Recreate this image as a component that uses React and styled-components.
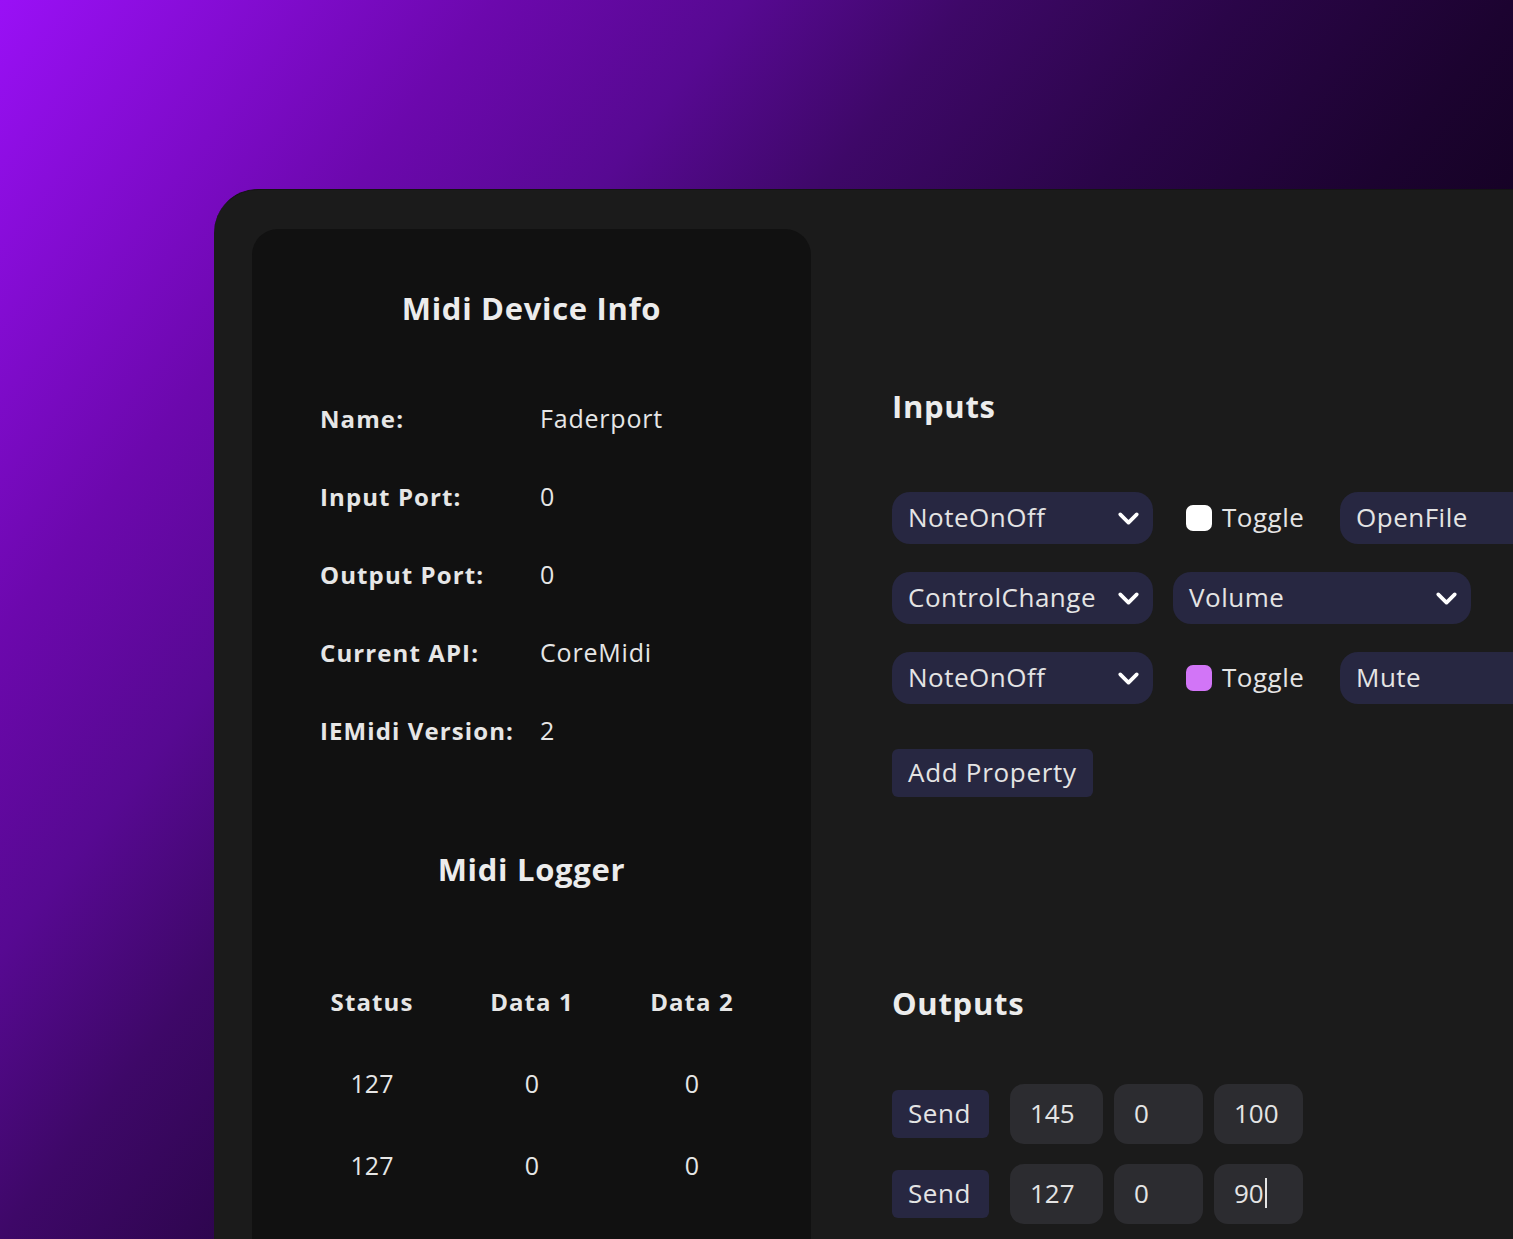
import React from "react";
import styled, { createGlobalStyle } from "styled-components";
import { ChevronDown } from "lucide-react";

const GlobalStyle = createGlobalStyle`
  html, body {
    margin: 0;
    padding: 0;
  }
  body {
    font-family: "Open Sans", "Liberation Sans", sans-serif;
    color: #e8e8e8;
  }
`;

const deviceInfo = [
  ["Name:", "Faderport"],
  ["Input Port:", "0"],
  ["Output Port:", "0"],
  ["Current API:", "CoreMidi"],
  ["IEMidi Version:", "2"],
];

const logRows = [
  ["127", "0", "0"],
  ["127", "0", "0"],
];

function Select({ value, width }) {
  return (
    <SelectBox $width={width}>
      <span>{value}</span>
      <ChevronDown size={33} strokeWidth={2.7} color="#ffffff" />
    </SelectBox>
  );
}

function App() {
  return (
    <>
      <GlobalStyle />
      <Page>
        <Window>
          <InfoPanel>
            <PanelTitle>Midi Device Info</PanelTitle>
            <InfoList>
              {deviceInfo.map(([label, value]) => (
                <InfoRow key={label}>
                  <Label>{label}</Label>
                  <Value>{value}</Value>
                </InfoRow>
              ))}
            </InfoList>
            <LoggerTitle>Midi Logger</LoggerTitle>
            <LogTable>
              <LogHead>Status</LogHead>
              <LogHead>Data 1</LogHead>
              <LogHead>Data 2</LogHead>
              {logRows.map((row, i) =>
                row.map((cell, j) => <LogCell key={`${i}-${j}`}>{cell}</LogCell>)
              )}
            </LogTable>
          </InfoPanel>

          <Main>
            <SectionTitle>Inputs</SectionTitle>
            <InputList>
              <PropRow>
                <Select value="NoteOnOff" width={261} />
                <ToggleLabel>
                  <Check $on={false} />
                  Toggle
                </ToggleLabel>
                <TextField>OpenFile</TextField>
              </PropRow>
              <PropRow>
                <Select value="ControlChange" width={261} />
                <Select value="Volume" width={298} />
              </PropRow>
              <PropRow>
                <Select value="NoteOnOff" width={261} />
                <ToggleLabel>
                  <Check $on />
                  Toggle
                </ToggleLabel>
                <TextField>Mute</TextField>
              </PropRow>
            </InputList>
            <AddButton>Add Property</AddButton>

            <OutputsTitle>Outputs</OutputsTitle>
            <OutputList>
              <OutRow>
                <SendButton>Send</SendButton>
                <NumField $width={93}>145</NumField>
                <NumField $width={89}>0</NumField>
                <NumField $width={89}>100</NumField>
              </OutRow>
              <OutRow>
                <SendButton>Send</SendButton>
                <NumField $width={93}>127</NumField>
                <NumField $width={89}>0</NumField>
                <NumField $width={89}>
                  90<Caret />
                </NumField>
              </OutRow>
            </OutputList>
          </Main>
        </Window>
      </Page>
    </>
  );
}

export default App;

const Page = styled.div`
  width: 1513px;
  height: 1239px;
  overflow: hidden;
  background: linear-gradient(
    128deg,
    #9a10f6 0%,
    #6c08ad 20%,
    #570992 30%,
    #3e0868 39%,
    #2a0548 50%,
    #1c0330 61%,
    #0a0010 80%,
    #06000a 100%
  );
  padding: 189px 0 0 214px;
  box-sizing: border-box;
`;

const Window = styled.div`
  width: 1400px;
  height: 1100px;
  background: #1b1b1b;
  border-top: 1px solid #141414;
  border-top-left-radius: 44px;
  box-sizing: border-box;
  padding: 39px 0 0 38px;
  display: grid;
  grid-template-columns: 559px 1fr;
  column-gap: 81px;
  overflow: hidden;
`;

const InfoPanel = styled.div`
  background: #111111;
  border-radius: 26px 26px 0 0;
  padding: 59px 0 0 68px;
  display: flex;
  flex-direction: column;
`;

const PanelTitle = styled.h2`
  margin: 0 68px 0 0;
  font-size: 31px;
  line-height: 40px;
  letter-spacing: 0.7px;
  font-weight: 700;
  text-align: center;
  color: #ececec;
`;

const LoggerTitle = styled(PanelTitle)`
  margin-top: 80px;
`;

const InfoList = styled.div`
  margin-top: 51px;
  display: flex;
  flex-direction: column;
`;

const InfoRow = styled.div`
  height: 78px;
  display: grid;
  grid-template-columns: 220px 1fr;
  align-items: center;
`;

const Label = styled.span`
  font-size: 24px;
  font-weight: 700;
  letter-spacing: 1.1px;
  color: #e6e6e6;
`;

const Value = styled.span`
  font-size: 25px;
  font-weight: 400;
  letter-spacing: 0.8px;
  color: #e6e6e6;
`;

const LogTable = styled.div`
  margin: 71px 0 0 -28px;
  width: 480px;
  display: grid;
  grid-template-columns: repeat(3, 160px);
  grid-auto-rows: 82px;
  align-items: center;
  justify-items: center;
`;

const LogHead = styled.span`
  font-size: 24px;
  font-weight: 700;
  letter-spacing: 1.1px;
  color: #e6e6e6;
`;

const LogCell = styled.span`
  font-size: 25px;
  color: #e6e6e6;
`;

const Main = styled.div`
  display: flex;
  flex-direction: column;
  align-items: flex-start;
`;

const SectionTitle = styled.h2`
  margin: 157px 0 0;
  font-size: 31px;
  line-height: 40px;
  letter-spacing: 0.7px;
  font-weight: 700;
  color: #ececec;
`;

const OutputsTitle = styled(SectionTitle)`
  margin-top: 186px;
`;

const InputList = styled.div`
  margin-top: 66px;
  display: flex;
  flex-direction: column;
  gap: 28px;
`;

const PropRow = styled.div`
  display: flex;
  align-items: center;
  gap: 20px;
  height: 52px;
`;

const SelectBox = styled.div`
  width: ${(p) => p.$width}px;
  height: 52px;
  box-sizing: border-box;
  padding: 0 8px 3px 16px;
  border-radius: 18px;
  background: #272741;
  display: flex;
  align-items: center;
  justify-content: space-between;
  font-size: 26px;
  letter-spacing: 0.5px;
  color: #e4e4e4;
  flex-shrink: 0;

  svg {
    margin-top: 3px;
  }
`;

const ToggleLabel = styled.label`
  width: 147px;
  box-sizing: border-box;
  padding-left: 13px;
  display: flex;
  align-items: center;
  gap: 10px;
  font-size: 26px;
  letter-spacing: 0.5px;
  color: #e4e4e4;
  flex-shrink: 0;
  line-height: 30px;
  padding-bottom: 3px;
`;

const Check = styled.span`
  width: 26px;
  height: 26px;
  margin-top: 3px;
  border-radius: 7px;
  background: ${(p) => (p.$on ? "#d275f7" : "#ffffff")};
  flex-shrink: 0;
`;

const TextField = styled.div`
  width: 320px;
  height: 52px;
  box-sizing: border-box;
  padding: 0 0 3px 16px;
  border-radius: 18px;
  background: #272741;
  display: flex;
  align-items: center;
  font-size: 26px;
  letter-spacing: 0.5px;
  color: #e4e4e4;
  flex-shrink: 0;
`;

const AddButton = styled.button`
  margin-top: 45px;
  height: 48px;
  padding: 0 16px 3px;
  border: none;
  border-radius: 6px;
  background: #272741;
  font-family: inherit;
  font-size: 26px;
  letter-spacing: 0.7px;
  color: #e4e4e4;
  cursor: pointer;
`;

const OutputList = styled.div`
  margin-top: 61px;
  display: flex;
  flex-direction: column;
  gap: 20px;
`;

const OutRow = styled.div`
  display: flex;
  align-items: center;
  gap: 11px;
`;

const SendButton = styled.button`
  width: 97px;
  height: 48px;
  margin-right: 10px;
  border: none;
  border-radius: 6px;
  background: #272741;
  font-family: inherit;
  font-size: 26px;
  letter-spacing: 0.6px;
  color: #e4e4e4;
  padding: 0 0 3px 16px;
  text-align: left;
  cursor: pointer;
`;

const NumField = styled.div`
  width: ${(p) => p.$width}px;
  height: 60px;
  box-sizing: border-box;
  padding: 0 0 3px 20px;
  border-radius: 14px;
  background: #2c2c30;
  display: flex;
  align-items: center;
  font-size: 26px;
  color: #e4e4e4;
`;

const Caret = styled.span`
  width: 2px;
  height: 30px;
  margin-left: 1px;
  background: #e4e4e4;
`;
